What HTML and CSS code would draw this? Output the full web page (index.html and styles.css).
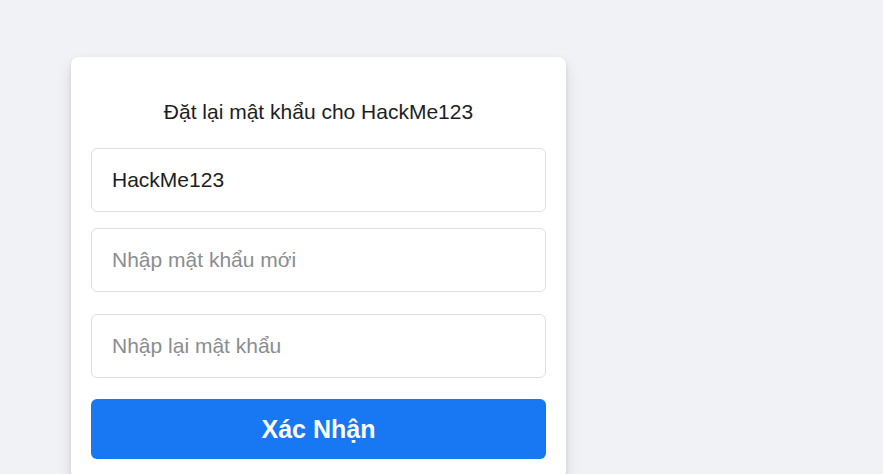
FILE: index.html
```html
<!DOCTYPE html>
<html lang="vi">
<head>
    <meta charset="UTF-8">
    <meta name="viewport" content="width=device-width, initial-scale=1.0">
    <title>Đặt lại mật khẩu</title>
    <link rel="stylesheet" href="styles.css">
</head>
<body>

<div class="card">
    <h2 class="title">Đặt lại mật khẩu cho HackMe123</h2>
    <form class="reset-form">
        <input type="text" class="field field-user" value="HackMe123">
        <input type="password" class="field field-new" placeholder="Nhập mật khẩu mới">
        <input type="password" class="field field-again" placeholder="Nhập lại mật khẩu">
        <button type="submit" class="submit">Xác Nhận</button>
    </form>
</div>

</body>
</html>
```

FILE: styles.css
```css
body {
    font-family: "Liberation Sans", Arial, sans-serif;
    background-color: #f0f2f5;
    margin: 0;
    padding: 57px 0 0 71px;
}
.card {
    width: 495px;
    box-sizing: border-box;
    background: #fff;
    padding: 43px 20px 20px;
    border-radius: 8px;
    box-shadow: 0 2px 4px rgba(0, 0, 0, 0.1), 0 8px 16px rgba(0, 0, 0, 0.1);
}
.title {
    margin: 0 0 24px;
    font-size: 21px;
    font-weight: normal;
    line-height: 24px;
    color: #1c1e21;
    text-align: center;
}
.reset-form {
    display: flex;
    flex-direction: column;
}
.field {
    height: 64px;
    box-sizing: border-box;
    padding: 0 20px;
    border: 1px solid #dddfe2;
    border-radius: 6px;
    font-family: inherit;
    font-size: 21px;
    color: #1c1e21;
    outline: none;
}
.field::placeholder {
    color: #8a8d91;
}
.field-user {
    margin-bottom: 16px;
}
.field-new {
    margin-bottom: 22px;
}
.field-again {
    margin-bottom: 21px;
}
.submit {
    height: 60px;
    background-color: #1877f2;
    color: #fff;
    border: none;
    border-radius: 6px;
    font-family: inherit;
    font-size: 25px;
    font-weight: bold;
    cursor: pointer;
}
```
